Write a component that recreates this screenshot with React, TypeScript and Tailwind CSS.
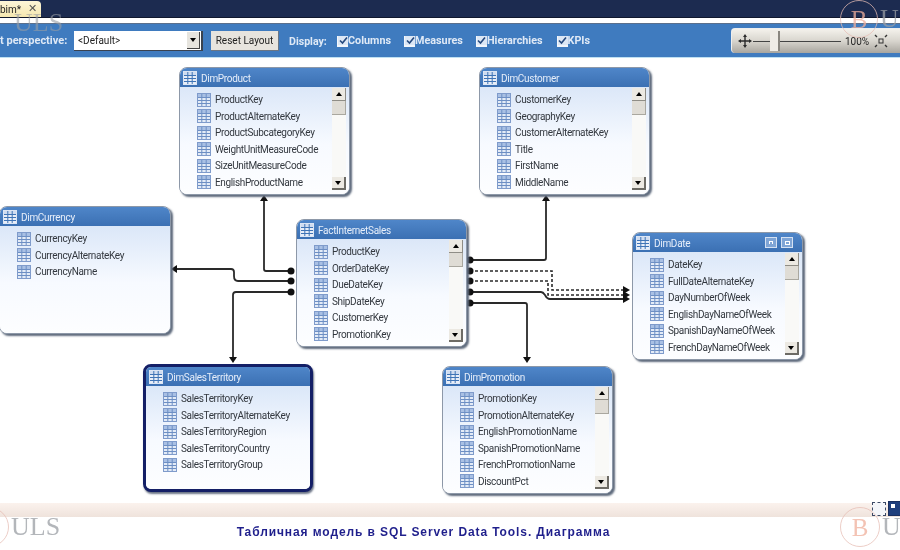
import React from "react";

function GridIcon({ header = false }: { header?: boolean }) {
  const line = header ? "#3f74b6" : "#6d8fc4";
  const fill = header ? "#e8eef8" : "#e3ebf7";
  const top = header ? "#cfdcf0" : "#a9c0e4";
  return (
    <svg width="14" height="14" viewBox="0 0 14 14" className="shrink-0">
      <rect x="0.5" y="0.5" width="13" height="13" fill={fill} stroke={header ? "#dbe5f4" : "#7f9bcb"} />
      <rect x="1" y="1" width="12" height="3" fill={top} />
      <path d="M4.8 1V13M9.2 1V13M1 4.5H13M1 7.5H13M1 10.5H13" stroke={line} strokeWidth="1" fill="none" />
    </svg>
  );
}

function ScrollBar() {
  return (
    <div className="absolute right-[3px] top-[20px] bottom-[4px] w-[14px] flex flex-col bg-[#f9f9f7]">
      <div className="h-[13px] bg-[#ece9e2] border-r border-b border-[#8f8d86] flex items-center justify-center">
        <div className="w-0 h-0 border-x-[3px] border-x-transparent border-b-[4px] border-b-black" />
      </div>
      <div className="h-[14px] bg-[#dfdcd5] border-r border-b border-[#a9a79f]" />
      <div className="flex-1" />
      <div className="h-[13px] bg-[#ece9e2] border-r-2 border-b-2 border-[#6d6b65] flex items-center justify-center">
        <div className="w-0 h-0 border-x-[3px] border-x-transparent border-t-[4px] border-t-black" />
      </div>
    </div>
  );
}

type TableProps = {
  title: string;
  rows: string[];
  pos: string;
  scroll?: boolean;
  selected?: boolean;
  buttons?: boolean;
};

function Table({ title, rows, pos, scroll = true, selected = false, buttons = false }: TableProps) {
  return (
    <div
      className={`absolute ${pos} rounded-lg overflow-hidden bg-white ${
        selected
          ? "border-[3px] border-[#141f66] shadow-[1px_2px_2px_#6b7486]"
          : "border border-[#8d98a8] shadow-[2px_2px_2px_#5f6b7d]"
      }`}
    >
      <div className="h-[19px] bg-gradient-to-b from-[#4f86c9] to-[#3b70b3] flex items-center pl-[3px] pr-[9px] gap-[4px]">
        <GridIcon header />
        <span className="text-[10px] tracking-[-0.3px] text-[#e6eefa] flex-1 pt-[1px]">{title}</span>
        {buttons && (
          <div className="flex gap-[4px]">
            <div className="w-[12px] h-[11px] bg-[#7fa5d6] border border-[#d5e1f2] flex items-center justify-center">
              <div className="w-[4px] h-[3px] border-t border-x border-white" />
            </div>
            <div className="w-[12px] h-[11px] bg-[#7fa5d6] border border-[#d5e1f2] flex items-center justify-center">
              <div className="w-[5px] h-[4px] border border-white" />
            </div>
          </div>
        )}
      </div>
      <div className="h-full bg-gradient-to-b from-[#dbe7f8] via-[#f7faff] via-45% to-white pt-[4.5px] pl-[17px] flex flex-col">
        {rows.map((r) => (
          <div key={r} className="h-[16.5px] flex items-center gap-[4px] shrink-0">
            <GridIcon />
            <span className="text-[10px] tracking-[-0.35px] text-[#33383f] whitespace-nowrap">{r}</span>
          </div>
        ))}
      </div>
      {scroll && <ScrollBar />}
    </div>
  );
}

function Check({ label, cls }: { label: string; cls: string }) {
  return (
    <div className={`flex items-center pt-[2px] ${cls}`}>
      <div className="w-[11px] h-[11px] bg-[#dce7f5] border-b-2 border-l border-[#f2f6fb] flex items-center justify-center">
        <svg width="9" height="9" viewBox="0 0 9 9">
          <path d="M1 4.5L3.5 7L8 1.5" stroke="#25497e" strokeWidth="1.6" fill="none" />
        </svg>
      </div>
      <span className="text-[10.8px] font-bold text-[#dfe9f6]">{label}</span>
    </div>
  );
}

function Watermark({ pos, text, size }: { pos: string; text: string; size: string }) {
  return (
    <div className={`absolute ${pos} flex items-center pointer-events-none opacity-75`}>
      <div className={`${size} rounded-full border border-[#e6bdb4] flex items-center justify-center shrink-0`}>
        <span className="font-['Liberation_Serif',serif] text-[25px] leading-none text-[#f0b09c]">B</span>
      </div>
      <span className="font-['Liberation_Serif',serif] text-[26px] leading-none text-[#9a9ea4] ml-[2px]">{text}</span>
    </div>
  );
}

function Links() {
  const stroke = "#2a2a2a";
  const dots: [number, number][] = [
    [291, 271], [291, 281], [291, 292],
    [470, 260], [470, 271], [470, 281], [470, 292], [470, 303],
  ];
  return (
    <svg className="absolute left-0 top-0" width="900" height="550" viewBox="0 0 900 550" fill="none">
      <g stroke={stroke} strokeWidth="1.8">
        <path d="M291 271H266Q264 271 264 269V200" />
        <path d="M291 281H238Q234 281 234 276V272Q234 269 231 269H176" />
        <path d="M291 292H236Q233 292 233 295V358" />
        <path d="M470 260H544Q546 260 546 258V200" />
        <path d="M470 292H541Q543 292 545 295Q547 299 550 299H624" />
        <path d="M470 303H525Q527 303 527 305V358" />
      </g>
      <g stroke={stroke} strokeWidth="1.6" strokeDasharray="3 2">
        <path d="M470 271H552V290H624" />
        <path d="M470 281H548V295H624" />
      </g>
      <g fill="#111">
        <path d="M264 195L260 201H268Z" />
        <path d="M171 269L177 265V273Z" />
        <path d="M233 363L229 357H237Z" />
        <path d="M546 195L542 201H550Z" />
        <path d="M527 363L523 357H531Z" />
        <path d="M630 290L623 286V294Z" />
        <path d="M630 295L623 291V299Z" />
        <path d="M630 299L623 295V303Z" />
        {dots.map(([x, y]) => (
          <circle key={`${x}-${y}`} cx={x} cy={y} r="3.5" />
        ))}
      </g>
    </svg>
  );
}

export default function App() {
  return (
    <div className="relative w-[900px] h-[550px] overflow-hidden bg-white flex flex-col font-['Roboto',sans-serif] blur-[0.5px]">
      <div className="h-[18px] shrink-0 bg-[#1c2b50] flex items-end border-b border-[#10182e]">
        <div className="w-[41px] h-[16px] bg-gradient-to-b from-[#fdf6d8] to-[#f5e7b0] flex items-center justify-between pr-[4px] rounded-tr-sm">
          <span className="text-[10px] text-[#222]">bim*</span>
          <span className="text-[11px] text-[#555]">✕</span>
        </div>
      </div>
      <div className="h-[5px] shrink-0 bg-white" />
      <div className="h-[34px] shrink-0 bg-[#3f7bbf] border-t border-[#5a6f8c] relative flex items-center">
        <span className="text-[11px] font-bold text-[#dfe9f6] w-[74px] whitespace-nowrap pt-[2px]">t perspective:</span>
        <div className="w-[129px] h-[20px] bg-white flex items-center justify-between pl-[4px] pr-[1px] border-r-2 border-b border-[#39424f] mt-[1px]">
          <span className="text-[10px] text-[#222]">&lt;Default&gt;</span>
          <div className="w-[13px] h-[17px] bg-[#e6e4de] border-r border-b border-[#444] flex items-center justify-center">
            <div className="w-0 h-0 border-x-[3px] border-x-transparent border-t-[4px] border-t-black" />
          </div>
        </div>
        <div className="ml-[8px] w-[68px] h-[20px] bg-[#e7e4de] border-b border-r border-[#6b7684] flex items-center justify-center text-[10px] text-[#222]">
          Reset Layout
        </div>
        <span className="ml-[10px] w-[38px] whitespace-nowrap text-[10.6px] font-bold text-[#dfe9f6] pt-[2px]">Display:</span>
        <Check label="Columns" cls="ml-[10px]" />
        <Check label="Measures" cls="ml-[13px]" />
        <Check label="Hierarchies" cls="ml-[13px]" />
        <Check label="KPIs" cls="ml-[14px]" />
        <div className="absolute left-[731px] top-[4px] w-[175px] h-[25px] rounded-sm bg-gradient-to-b from-[#f4f2ec] via-[#d8d5ce] to-[#a9a69f] flex items-center pl-[6px] border-l border-t border-[#eee]">
          <svg width="14" height="14" viewBox="0 0 14 14" className="shrink-0">
            <path d="M7 0L9 3H5ZM7 14L5 11H9ZM0 7L3 5V9ZM14 7L11 9V5Z" fill="#2b2b2b" />
            <path d="M7 3V11M3 7H11" stroke="#2b2b2b" strokeWidth="1.4" />
          </svg>
          <div className="relative ml-[1px] w-[88px] h-[20px] flex items-center">
            <div className="w-full h-[1px] bg-[#444]" />
            <div className="absolute left-[17px] top-0 w-[10px] h-[20px] bg-[#efece6] border-r-2 border-[#8a8780]" />
          </div>
          <span className="ml-[4px] text-[10px] text-[#222]">100%</span>
          <svg width="14" height="14" viewBox="0 0 14 14" className="ml-[5px] shrink-0">
            <rect x="5" y="5" width="4" height="4" fill="none" stroke="#333" />
            <path d="M1 1L3 3M13 1L11 3M1 13L3 11M13 13L11 11" stroke="#333" strokeWidth="1.4" />
          </svg>
        </div>
      </div>
      <div className="relative flex-1 bg-white">
        <div className="h-[1px] bg-[#bfe0f2]" />
      </div>
      <div className="h-[14px] shrink-0 bg-gradient-to-b from-[#fbf2ed] to-[#efe3dc]" />
      <div className="h-[33px] shrink-0 flex items-start justify-center pt-[6px] pr-[53px] font-['Liberation_Sans',sans-serif]">
        <span className="text-[12px] font-bold tracking-[0.9px] text-[#1f1f8c] whitespace-nowrap">
          Табличная модель в SQL Server Data Tools. Диаграмма
        </span>
      </div>

      <Links />

      <Table
        title="DimProduct"
        pos="left-[179px] top-[67px] w-[171px] h-[128px]"
        rows={["ProductKey", "ProductAlternateKey", "ProductSubcategoryKey", "WeightUnitMeasureCode", "SizeUnitMeasureCode", "EnglishProductName"]}
      />
      <Table
        title="DimCustomer"
        pos="left-[479px] top-[67px] w-[171px] h-[128px]"
        rows={["CustomerKey", "GeographyKey", "CustomerAlternateKey", "Title", "FirstName", "MiddleName"]}
      />
      <Table
        title="DimCurrency"
        pos="left-[-1px] top-[206px] w-[172px] h-[128px]"
        scroll={false}
        rows={["CurrencyKey", "CurrencyAlternateKey", "CurrencyName"]}
      />
      <Table
        title="FactInternetSales"
        pos="left-[296px] top-[219px] w-[171px] h-[128px]"
        rows={["ProductKey", "OrderDateKey", "DueDateKey", "ShipDateKey", "CustomerKey", "PromotionKey"]}
      />
      <Table
        title="DimDate"
        pos="left-[632px] top-[232px] w-[171px] h-[128px]"
        buttons
        rows={["DateKey", "FullDateAlternateKey", "DayNumberOfWeek", "EnglishDayNameOfWeek", "SpanishDayNameOfWeek", "FrenchDayNameOfWeek"]}
      />
      <Table
        title="DimSalesTerritory"
        pos="left-[143px] top-[364px] w-[170px] h-[128px]"
        scroll={false}
        selected
        rows={["SalesTerritoryKey", "SalesTerritoryAlternateKey", "SalesTerritoryRegion", "SalesTerritoryCountry", "SalesTerritoryGroup"]}
      />
      <Table
        title="DimPromotion"
        pos="left-[442px] top-[366px] w-[171px] h-[128px]"
        rows={["PromotionKey", "PromotionAlternateKey", "EnglishPromotionName", "SpanishPromotionName", "FrenchPromotionName", "DiscountPct"]}
      />

      <div className="absolute left-[872px] top-[502px] w-[14px] h-[14px] bg-[#f4f6fa] border border-dashed border-[#3c4a66]" />
      <div className="absolute left-[888px] top-[501px] w-[14px] h-[15px] bg-[#1f3f7d] border border-[#1a2f5f]">
        <div className="w-[4px] h-[4px] bg-white mt-[2px] ml-[2px]" />
      </div>

      <span className="absolute left-[14px] top-[10px] font-['Liberation_Serif',serif] text-[26px] leading-none text-[#9a9ea4] opacity-60">
        ULS
      </span>
      <Watermark pos="left-[840px] top-[0px]" size="w-[38px] h-[38px]" text="U" />
      <Watermark pos="left-[-31px] top-[507px]" size="w-[40px] h-[40px]" text="ULS" />
      <Watermark pos="left-[840px] top-[507px]" size="w-[40px] h-[40px]" text="U" />
    </div>
  );
}
